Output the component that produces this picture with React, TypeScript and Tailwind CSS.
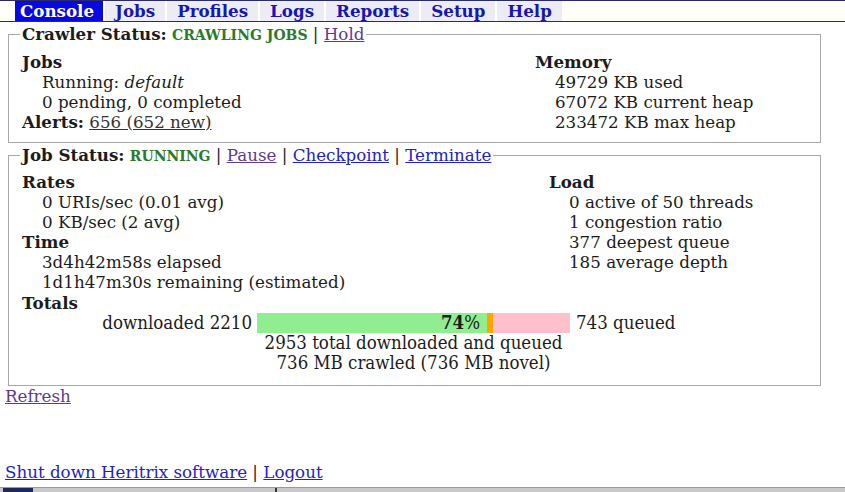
const serif = "font-['DejaVu_Serif','Liberation_Serif',serif]"
const condensed = "font-['DejaVu_Serif_Condensed','DejaVu_Serif',serif] [font-stretch:condensed]"

const tabs = ['Console', 'Jobs', 'Profiles', 'Logs', 'Reports', 'Setup', 'Help']

function NavBar() {
  return (
    <div className="flex h-[22px] items-stretch gap-[2px] border-y border-[#2b2b6b] bg-[#fffff8] pl-[15px]">
      {tabs.map((t, i) => (
        <span
          key={t}
          className={
            i === 0
              ? 'bg-[#0808e0] pr-[9px] pl-[5px] text-[16.7px] leading-[20px] font-bold text-white'
              : 'bg-[#ececf6] px-[10px] text-[16.7px] leading-[20px] font-bold text-[#1616b4]'
          }
        >
          {t}
        </span>
      ))}
    </div>
  )
}

function Box({ legend, children, className }: { legend: React.ReactNode; children: React.ReactNode; className?: string }) {
  return (
    <fieldset className={`ml-2 w-[813px] border border-[#a8a8a8] pl-[13px] ${className ?? ''}`}>
      <legend className="-ml-[2px] px-[2px] leading-[20px]">{legend}</legend>
      {children}
    </fieldset>
  )
}

function Status({ children }: { children: React.ReactNode }) {
  return <span className="text-[14px] font-bold text-[#2b7a2b]">{children}</span>
}

function Line({ children, head }: { children: React.ReactNode; head?: boolean }) {
  return <div className={head ? 'font-bold' : 'pl-[20px]'}>{children}</div>
}

const blue = 'text-[#2222cc] underline'
const purple = 'text-[#5b3b95] underline'

export default function App() {
  return (
    <div className={`${serif} min-h-[492px] bg-white text-[16.7px] leading-[20px] text-[#1c1c1c]`}>
      <NavBar />

      <Box
        className="mt-[2px] pt-[7px] pb-[10px]"
        legend={
          <>
            <b>Crawler Status:</b> <Status>CRAWLING JOBS</Status> | <span className={purple}>Hold</span>
          </>
        }
      >
        <div className="flex">
          <div className="w-[513px]">
            <Line head>Jobs</Line>
            <Line>
              Running: <i>default</i>
            </Line>
            <Line>0 pending, 0 completed</Line>
            <div>
              <b>Alerts:</b> <span className="text-[#333] underline">656 (652 new)</span>
            </div>
          </div>
          <div>
            <Line head>Memory</Line>
            <Line>49729 KB used</Line>
            <Line>67072 KB current heap</Line>
            <Line>233472 KB max heap</Line>
          </div>
        </div>
      </Box>

      <Box
        className="mt-[2px] pt-[6px] pb-[12px]"
        legend={
          <>
            <b>Job Status:</b> <Status>RUNNING</Status> | <span className={purple}>Pause</span> |{' '}
            <span className={blue}>Checkpoint</span> | <span className={blue}>Terminate</span>
          </>
        }
      >
        <div className="flex">
          <div className="w-[527px]">
            <Line head>Rates</Line>
            <Line>0 URIs/sec (0.01 avg)</Line>
            <Line>0 KB/sec (2 avg)</Line>
            <Line head>Time</Line>
            <Line>3d4h42m58s elapsed</Line>
            <Line>1d1h47m30s remaining (estimated)</Line>
          </div>
          <div>
            <Line head>Load</Line>
            <Line>0 active of 50 threads</Line>
            <Line>1 congestion ratio</Line>
            <Line>377 deepest queue</Line>
            <Line>185 average depth</Line>
          </div>
        </div>
        <div className="pt-px font-bold">Totals</div>
        <div className={`${condensed} text-[18.5px]`}>
          <div className="flex items-center">
            <div className="w-[230px] text-right">downloaded 2210</div>
            <div className="ml-[5px] flex h-[20px] w-[313px]">
              <div className="w-[230px] bg-[#90ee90] pr-[7px] text-right leading-[20px]">
                <b>74</b>%
              </div>
              <div className="w-[6px] bg-[#ffa500]" />
              <div className="flex-1 bg-[#ffc0cb]" />
            </div>
            <div className="ml-[6px]">743 queued</div>
          </div>
          <div className="ml-[235px] w-[313px] text-center whitespace-nowrap">
            <div>2953 total downloaded and queued</div>
            <div>736 MB crawled (736 MB novel)</div>
          </div>
        </div>
      </Box>

      <div className="pl-[5px]">
        <span className={purple}>Refresh</span>
      </div>

      <div className="mt-[56px] pl-[5px]">
        <span className={blue}>Shut down Heritrix software</span> | <span className={blue}>Logout</span>
      </div>

      <div className="mt-[5px] flex h-[5px] border-t border-[#9a9a9a] bg-[#c9c9c9]">
        <div className="ml-[3px] w-[30px] bg-[#1b2a5a]" />
        <div className="ml-[242px] w-[2px] bg-[#333]" />
      </div>
    </div>
  )
}
